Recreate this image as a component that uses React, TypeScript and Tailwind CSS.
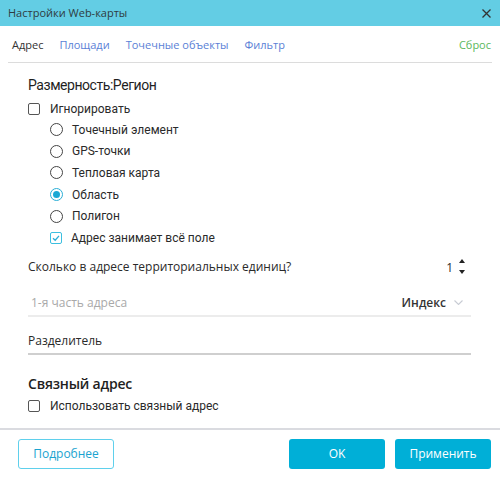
import React from "react"

const tabs = ["Площади", "Точечные объекты", "Фильтр"]
const radios = [
  { label: "Точечный элемент", on: false },
  { label: "GPS-точки", on: false },
  { label: "Тепловая карта", on: false },
  { label: "Область", on: true },
  { label: "Полигон", on: false },
]

function Box({ checked }: { checked?: boolean }) {
  return (
    <span
      className={
        "flex h-[12px] w-[12px] shrink-0 items-center justify-center rounded-[2px] border " +
        (checked ? "border-[#3cbfe0]" : "border-[#555]")
      }
    >
      {checked && (
        <svg width="8" height="8" viewBox="0 0 8 8">
          <path d="M1 4.2 L3.2 6.2 L7 1.8" fill="none" stroke="#2aaed6" strokeWidth="1.3" />
        </svg>
      )}
    </span>
  )
}

function Radio({ on }: { on?: boolean }) {
  return (
    <span
      className={
        "flex h-[13px] w-[13px] shrink-0 items-center justify-center rounded-full border " +
        (on ? "border-[#2aaed6]" : "border-[#444]")
      }
    >
      {on && <span className="h-[7px] w-[7px] rounded-full bg-[#1ba8d4]" />}
    </span>
  )
}

export default function App() {
  return (
    <div className="flex h-[478px] w-[500px] flex-col bg-white font-['Open_Sans',sans-serif] text-[#2a2a2a]">
      {/* title bar */}
      <div className="flex h-[26px] items-center justify-between bg-[#63cde4] pl-[8px] pr-[9px]">
        <span className="text-[11px] text-[#2f3b40]">Настройки Web-карты</span>
        <svg width="9" height="9" viewBox="0 0 9 9">
          <path d="M0.5 0.5 L8.5 8.5 M8.5 0.5 L0.5 8.5" stroke="#333" strokeWidth="1.3" />
        </svg>
      </div>

      {/* tabs */}
      <div className="mx-[8px] flex h-[37px] items-center border-b border-[#dcdcdc] pl-[4px] pt-[2px] text-[11px]">
        <span className="text-[#333]">Адрес</span>
        {tabs.map((t) => (
          <span key={t} className="ml-[16px] text-[#5a7fd6]">
            {t}
          </span>
        ))}
        <span className="ml-auto pr-[1px] text-[#5cb85c]">Сброс</span>
      </div>

      {/* body */}
      <div className="flex flex-1 flex-col pl-[28px] pr-[29px]">
        <div className="mt-[12px] font-['Roboto',sans-serif] text-[14px] leading-[20px] tracking-[-0.45px] text-[#1f1f1f]">
          Размерность:Регион
        </div>
        <div className="mt-[3px] flex h-[21px] items-center gap-[10px] font-['Roboto',sans-serif] text-[12px]">
          <Box />
          <span>Игнорировать</span>
        </div>
        <div className="flex flex-col pl-[22px] font-['Roboto',sans-serif] text-[12px]">
          {radios.map((r) => (
            <div key={r.label} className="flex h-[21.6px] items-center gap-[9px]">
              <Radio on={r.on} />
              <span>{r.label}</span>
            </div>
          ))}
          <div className="flex h-[21.6px] items-center gap-[9px]">
            <Box checked />
            <span>Адрес занимает всё поле</span>
          </div>
        </div>

        <div className="mt-[6px] flex h-[24px] items-center text-[12px]">
          <span>Сколько в адресе территориальных единиц?</span>
          <span className="ml-auto mr-[6px] mt-[2px]">1</span>
          <span className="mr-[6px] flex flex-col gap-[7px]">
            <svg width="6" height="4" viewBox="0 0 6 4">
              <path d="M0 4 L3 0 L6 4Z" fill="#222" />
            </svg>
            <svg width="6" height="4" viewBox="0 0 6 4">
              <path d="M0 0 L3 4 L6 0Z" fill="#222" />
            </svg>
          </span>
        </div>

        <div className="mt-[12px] flex h-[26px] items-center border-b-2 border-[#ececec] pl-[3px] text-[12px]">
          <span className="text-[#a9a9a9]">1-я часть адреса</span>
          <span className="ml-auto font-semibold text-[#333]">Индекс</span>
          <svg className="ml-[8px] mr-[8px]" width="9" height="5" viewBox="0 0 9 5">
            <path d="M0.5 0.5 L4.5 4.5 L8.5 0.5" fill="none" stroke="#c8ccd4" strokeWidth="1.1" />
          </svg>
        </div>

        <div className="mt-[13px] flex h-[25px] items-center border-b-2 border-[#cfcfcf] text-[12px]">
          <span>Разделитель</span>
        </div>

        <div className="mt-[19px] text-[14px] font-[550] tracking-[-0.2px] leading-[20px] text-[#1f1f1f]">
          Связный адрес
        </div>
        <div className="mt-[2px] flex h-[21px] items-center gap-[10px] font-['Roboto',sans-serif] text-[12px]">
          <Box />
          <span>Использовать связный адрес</span>
        </div>
      </div>

      {/* footer */}
      <div className="flex h-[50px] items-center border-t-2 border-[#dadbe0] px-[9px] pb-[1px] text-[12px]">
        <button className="ml-[9px] h-[30px] w-[96px] rounded-[3px] border border-[#5fd0ec] text-[#1ba3cf]">
          Подробнее
        </button>
        <button className="ml-auto h-[30px] w-[96px] rounded-[3px] bg-[#00afd7] text-white">
          OK
        </button>
        <button className="ml-[10px] h-[30px] w-[96px] rounded-[3px] bg-[#00afd7] text-white">
          Применить
        </button>
      </div>
    </div>
  )
}
